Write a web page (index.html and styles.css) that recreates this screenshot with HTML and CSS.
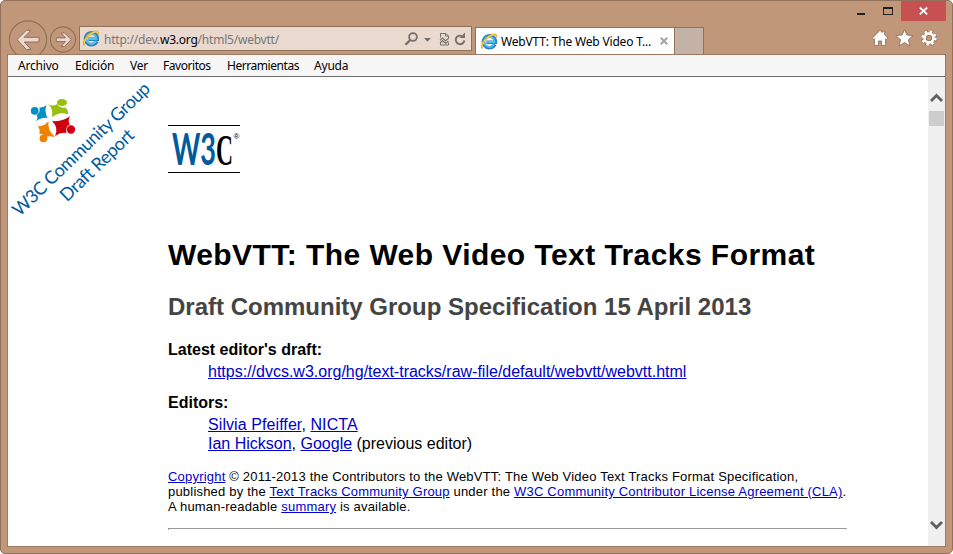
FILE: index.html
```html
<!DOCTYPE html>
<html lang="es">
<head>
<meta charset="utf-8">
<title>WebVTT: The Web Video Text Tracks Format</title>
<link rel="stylesheet" href="styles.css">
</head>
<body>
<svg class="defs" width="0" height="0">
  <symbol id="ie" viewBox="0 0 16 16">
    <path d="M13.9 10.7A6 6 0 1 1 14.4 8.8H5.4" fill="none" stroke="#2b83bd" stroke-width="3.4"/>
    <path d="M12.9 10.5A5.1 5.1 0 1 1 13.4 8.6H5" fill="none" stroke="#55bdf0" stroke-width="2"/>
    <path d="M1.5 15C-.8 12.2 3.3 6 8 2.9C12 .3 15.8-.2 15.2 4" fill="none" stroke="#e9a91b" stroke-width="1.9"/>
    <path d="M1.5 14.4C0 11.8 3.8 6.2 8 3.3C11.8.9 15 .3 14.8 3" fill="none" stroke="#ffe04a" stroke-width=".9"/>
  </symbol>
</svg>
<div class="window">
  <header class="chrome">
    <div class="nav">
      <svg width="71" height="54" viewBox="-1 0 71 54">
        <g fill="none" stroke="#92705a" stroke-width="1.2">
          <circle cx="20" cy="38.5" r="18.6"/><circle cx="55" cy="38.5" r="12.6"/>
        </g>
        <g fill="#e9d9cf" stroke="#92705a" stroke-width="1">
          <path d="M9 38.5 18.4 29.3H23L16.2 36.3H31V41H16.2L23 48.5H18.4Z"/>
          <path d="M63.3 38.5 56.5 32H53L57.5 36.9H48.3V40.6H57.5L53 45.5H56.5Z"/>
        </g>
      </svg>
    </div>
    <div class="address">
      <svg class="ie" width="16" height="17"><use href="#ie"/></svg>
      <span class="url">http://dev.<b>w3.org</b>/html5/webvtt/</span>
      <svg class="tools" width="64" height="16" viewBox="0 0 64 16" fill="none" stroke="#76706c">
        <circle cx="10" cy="6" r="3.9" stroke-width="1.8"/><path d="M7.2 9 2.5 13.8" stroke-width="2.3"/>
        <path d="M21 7h7L24.500 10.700Z" fill="#76706c" stroke="none"/>
        <path d="M37.500 6.500V2.500h5.500l2.500 2.500V7.500M37.500 11.500v2.500h8V11.500M42.500 2.500V5H45" stroke-width="1"/><path d="M37 9.300 39.500 7l3 2.800 3-2.300M37 11.800l2.500-2 3 2.500 3-2" stroke-width="1.200"/>
        <path d="M61.300 9.300A4.300 4.300 0 1 1 58.800 5" stroke-width="1.900"/><path d="M62 1.500V7H56.500Z" fill="#76706c" stroke="none"/>
      </svg>
    </div>
    <div class="tab">
      <svg class="ie" width="16" height="17"><use href="#ie"/></svg>
      <span class="tabname">WebVTT: The Web Video T...</span>
      <svg width="8" height="8"><path d="M.7.7l6.6 6.6M7.3.7.7 7.3" stroke="#a5a5a5" stroke-width="2"/></svg>
    </div>
    <div class="newtab"></div>
    <div class="corner">
      <div class="winbtns">
        <svg width="40" height="20"><path d="M0 12h8v2H0z" fill="#222"/><path d="M26 6h10v8H26zM27 8v5h8V8z" fill="#222" fill-rule="evenodd"/></svg>
        <div class="close"><svg width="9" height="8"><path d="M.8.5 8.2 7.3M8.2.5.8 7.3" stroke="#fff" stroke-width="1.8"/></svg></div>
      </div>
      <svg class="actions" width="66" height="18" viewBox="0 0 66 18" fill="#fff" stroke="#8a6851" stroke-width=".8">
        <path d="M.2 9.200 8 1.400l2.300 2.200V2.300h2.300v3.500L15.800 9.200l-1.300 1.400-.9-.8V16.500H9.600v-4.500H6.400v4.500H2.400V9.800l-.9.8Z"/>
        <path d="M32.500.5l2.400 5.600 6.200.5-4.700 4.100 1.600 6.300-5.500-3.500-5.500 3.500 1.600-6.300-4.700-4.100 6.200-.5Z"/>
        <circle cx="57" cy="9" r="6.200" fill="none" stroke="#8a6851" stroke-width="4" stroke-dasharray="3 1.870"/>
        <circle cx="57" cy="9" r="6.300" fill="none" stroke="#fff" stroke-width="2.800" stroke-dasharray="2.400 2.548"/>
        <circle cx="57" cy="9" r="4.400" fill="none" stroke="#fff" stroke-width="2.700"/><circle cx="57" cy="9" r="2.800" fill="none"/>
      </svg>
    </div>
  </header>
  <main class="pane">
    <nav class="menu"><span>Archivo</span><span>Edición</span><span>Ver</span><span>Favoritos</span><span>Herramientas</span><span>Ayuda</span></nav>
    <div class="view">
      <aside>
        <svg width="150" height="145" viewBox="8 77 150 145">
          <g fill="#0090c8"><circle cx="34.700" cy="110.800" r="3.900"/><path d="M46.500 105Q44 111 47.500 118Q41 117 36 121.500Q38.500 117.500 36.500 115Q40.500 113 39.500 107.500Q43 108 46.500 105Z"/></g>
          <g fill="#97bf0d"><ellipse cx="62" cy="102.500" rx="5" ry="3.500"/><path d="M48 104Q53 107 57 104Q60 108.500 65.500 107.500Q68.500 110 68 114.500Q60 111 52 117Q53.500 109 48 104Z"/></g>
          <g fill="#ee8100"><circle cx="43.500" cy="138.300" r="3.900"/><path d="M38 126Q44 127 48.500 121Q47 130 55 137Q48.500 135.500 45.500 137Q43 133 39.500 134Q40.500 130 38 126Z"/></g>
          <g fill="#cf0010"><circle cx="71" cy="129.500" r="4.200"/><path d="M52 121Q63 122 70 116Q67.500 121 70 124.500Q65 126 66.500 133Q60.500 132 55 136Q59 128 52 121Z"/></g>
          <g class="ribbon"><text transform="translate(19.500 217) rotate(-43.900)" textLength="183">W3C Community Group</text>
          <text transform="translate(67 202.500) rotate(-43.900)" textLength="95">Draft Report</text></g>
        </svg>
      </aside>
      <article>
        <svg class="w3c" width="72" height="48" viewBox="0 0 72 48">
          <path d="M0 .5h72M0 47.500h72" stroke="#000"/>
          <text class="mark blue" x="4" y="40" textLength="44" lengthAdjust="spacingAndGlyphs">W3</text>
          <text class="mark cee" x="48" y="40" textLength="17" lengthAdjust="spacingAndGlyphs">C</text>
          <text class="reg" x="65.500" y="14">®</text>
        </svg>
        <h1>WebVTT: The Web Video Text Tracks Format</h1>
        <h2>Draft Community Group Specification 15 April 2013</h2>
        <dl>
          <dt>Latest editor's draft:</dt>
          <dd><a>https://dvcs.w3.org/hg/text-tracks/raw-file/default/webvtt/webvtt.html</a></dd>
          <dt class="second">Editors:</dt>
          <dd class="wide"><a>Silvia Pfeiffer</a>, <a>NICTA</a></dd>
          <dd><a>Ian Hickson</a>, <a>Google</a> (previous editor)</dd>
        </dl>
        <p><a>Copyright</a> © 2011-2013 the Contributors to the WebVTT: The Web Video Text Tracks Format Specification,<br>published by the <a>Text Tracks Community Group</a> under the <a>W3C Community Contributor License Agreement (CLA)</a>.<br>A human-readable <a>summary</a> is available.</p>
        <div class="rule"></div>
      </article>
      <div class="scroll">
        <svg width="13" height="10"><path d="M1 8 6.500 2.500 12 8" fill="none" stroke="#606060" stroke-width="2.800"/></svg>
        <div class="thumb"></div>
        <svg class="down" width="13" height="10"><path d="M1 2 6.500 7.500 12 2" fill="none" stroke="#606060" stroke-width="2.800"/></svg>
      </div>
    </div>
  </main>
</div>
</body>
</html>
```
FILE: styles.css
```css
* { box-sizing: border-box; }
body { margin: 0; background: #fff; font-family: "Liberation Sans", Arial, sans-serif; }
svg { display: block; flex: none; overflow: visible; }
.defs { display: none; }
.window { width: 953px; height: 554px; padding: 0 6px 6px; border: 1px solid #93705a; border-radius: 5px; background: #c19779; overflow: hidden; }
.chrome { display: flex; height: 53px; align-items: flex-end; }
.nav { width: 72px; height: 53px; overflow: hidden; flex: none; }
.address, .tab, .newtab { border: 1px solid #92705a; flex: none; }
.address { display: flex; align-items: center; width: 393px; height: 25px; margin-bottom: 3px; background: #e9d9cf; padding: 0 4px 0 3px; }
.url { margin-left: 5px; padding-top: 2px; font: 12px "Noto Sans", sans-serif; letter-spacing: -.22px; color: #777; flex: 1; white-space: nowrap; }
.url b { font-weight: 400; color: #000; }
.tab { display: flex; align-items: center; width: 200px; height: 27px; margin-left: 3px; padding: 0 6px 0 5px; background: #fff; border-bottom: 0; }
.tabname { flex: 1; margin-left: 4px; padding-top: 1px; font: 12px "Noto Sans", sans-serif; letter-spacing: -.18px; white-space: nowrap; }
.newtab { width: 29px; height: 27px; background: #c4b2a7; border-left: 0; border-bottom: 0; }
.corner { flex: 1; align-self: flex-start; display: flex; flex-direction: column; align-items: flex-end; }
.winbtns { display: flex; width: 89px; }
.close { width: 45px; height: 20px; margin-left: 4px; display: grid; place-items: center; background: #c75050; }
.actions { margin: 8px 8px 0 0; }
.pane { height: 493px; border: 1px solid #9d7961; background: #fff; }
.menu { display: grid; grid-template-columns: 57px 55px 33px 64px 87px 50px; height: 22px; padding-left: 10px; background: #f6f6f6; border-bottom: 1px solid #6d6d6d; font: 12px/22px "Noto Sans", sans-serif; letter-spacing: -.2px; }
.menu span:nth-child(4), .menu span:nth-child(5) { letter-spacing: -.45px; }
.view { display: flex; height: 469px; }
aside { width: 160px; flex: none; }
.ribbon { font: 18px Lato, sans-serif; fill: #005a9c; }
article { width: 760px; flex: none; white-space: nowrap; }
.w3c { margin-top: 48px; }
.mark { font: 44px "Open Sans", sans-serif; }
.blue { font-family: Lato, sans-serif; fill: #005a9c; font-weight: 700; }
.cee { font-family: "Liberation Serif", serif; font-weight: 700; }
.reg { font-size: 8px; }
h1 { margin: 64px 0 0; font-size: 30px; line-height: 36px; letter-spacing: .44px; }
h2 { margin: 20px 0 0; font-size: 24px; line-height: 28px; color: #444; }
dl { margin: 19px 0 0; font-size: 16px; line-height: 19px; }
dt { font-weight: 700; margin-bottom: 3px; }
.second { margin-top: 12px; }
dd { margin-left: 40px; }
dd.wide { letter-spacing: .08px; }
a { color: #0000cc; text-decoration: underline; }
p { margin: 16px 0 0; font-size: 13px; line-height: 15px; letter-spacing: .2px; }
.rule { width: 679px; height: 2px; margin-top: 14px; border-top: 1px solid #9a9a9a; border-left: 1px solid #9a9a9a; border-right: 1px solid #ddd; }
.scroll { width: 17px; background: #f0f0f0; display: flex; flex-direction: column; align-items: center; padding: 16px 0 16px; }
.thumb { width: 15px; height: 15px; margin-top: 8px; background: #cdcdcd; }
.down { margin-top: auto; }
```
